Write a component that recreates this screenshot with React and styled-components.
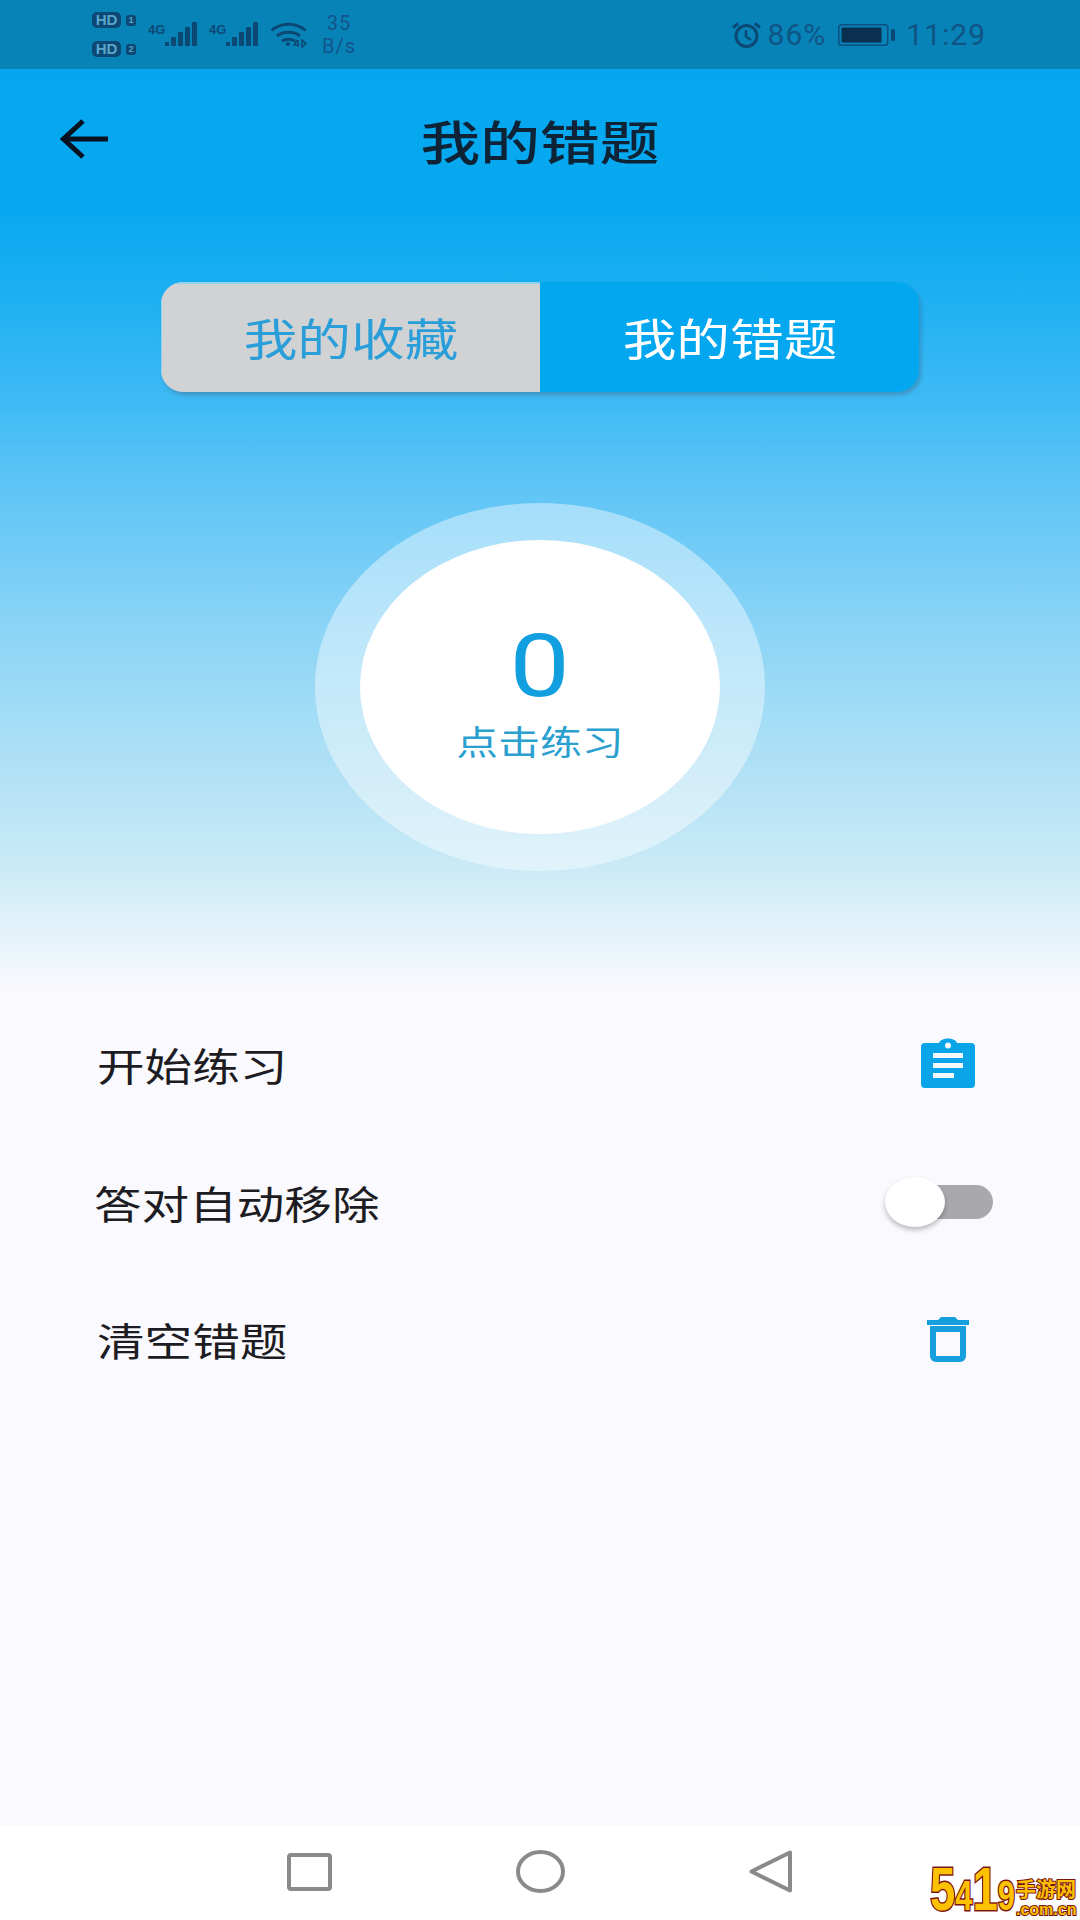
import styled, { createGlobalStyle } from "styled-components";

const GlobalStyle = createGlobalStyle`
  html, body {
    margin: 0;
    padding: 0;
  }

  body {
    font-family: "Noto Sans CJK SC", "Noto Sans", sans-serif;
    background: #f9f9fe;
  }
`;

const Page = styled.div`
  position: relative;
  width: 1080px;
  height: 1920px;
  display: flex;
  flex-direction: column;
  overflow: hidden;
  background: #f9f9fe;
`;

const StatusBar = styled.div`
  height: 69px;
  flex: none;
  display: flex;
  align-items: center;
  justify-content: space-between;
  padding: 0 94px 0 92px;
  background: #0783b8;
  color: #0c4f80;
`;

const StatusGroup = styled.div`
  display: flex;
  align-items: center;
`;

const SimColumn = styled.div`
  display: flex;
  flex-direction: column;
  gap: 13px;
  margin-right: 12px;
`;

const SimRow = styled.div`
  display: flex;
  align-items: center;
  gap: 5px;
`;

const HdBadge = styled.span`
  width: 29px;
  height: 16px;
  border-radius: 5px;
  background: #0b4974;
  color: #5aa6cb;
  font: 700 15px/16px "Liberation Sans", sans-serif;
  text-align: center;
`;

const SimIndex = styled.span`
  width: 10px;
  height: 11px;
  border-radius: 3px;
  background: #0b4974;
  color: #5aa5c9;
  font: 700 9px/11px "Liberation Sans", sans-serif;
  text-align: center;
`;

const SignalBlock = styled.div`
  width: 61px;
  display: flex;
`;

const Speed = styled.div`
  margin-left: 14px;
  width: 36px;
  display: flex;
  flex-direction: column;
  align-items: center;
  gap: 5px;
  font: 400 20px/18px Roboto, sans-serif;
  letter-spacing: 1px;
  color: #14548a;
`;

const StatusText = styled.span`
  font: 400 30px/1 Roboto, sans-serif;
  letter-spacing: 1px;
  color: #0f5484;
  margin: ${(p) => p.$margin};
`;

const Hero = styled.div`
  height: 921px;
  flex: none;
  display: flex;
  flex-direction: column;
  align-items: center;
  background: linear-gradient(
    180deg,
    #05a8f0 0px,
    #07a8f0 140px,
    #21b1f3 240px,
    #42bbf5 340px,
    #62c6f6 430px,
    #8ed5f6 570px,
    #abdff5 680px,
    #c8e9f6 790px,
    #eaf5fb 880px,
    #f9f9fe 921px
  );
`;

const Header = styled.header`
  position: relative;
  width: 100%;
  height: 143px;
  display: flex;
  align-items: center;
  justify-content: center;
`;

const BackButton = styled.button`
  position: absolute;
  left: 60px;
  top: 50px;
  padding: 0;
  border: 0;
  background: none;
  display: flex;
`;

const Title = styled.h1`
  margin: -3px 0 0;
  font-size: 47px;
  font-weight: 500;
  line-height: 1;
  letter-spacing: 0;
  color: #0f2336;
  transform: scaleX(1.27);
`;

const Tabs = styled.div`
  margin-top: 70px;
  width: 758px;
  height: 110px;
  display: grid;
  grid-template-columns: 1fr 1fr;
  border-radius: 22px;
  overflow: hidden;
  box-shadow: 2px 3px 4px rgba(70, 90, 120, 0.4);
`;

const Tab = styled.div`
  display: flex;
  align-items: center;
  justify-content: center;
  font-size: 44px;
  color: ${(p) => (p.$active ? "#ffffff" : "#2a9ed9")};
  background: ${(p) => (p.$active ? "#02a7f0" : "#d1d2d4")};
  box-shadow: ${(p) => (p.$active ? "none" : "inset 1px 2px 0 #8fd3ee")};

  span {
    display: block;
    transform: scaleX(1.22);
  }
`;

const Ring = styled.div`
  margin-top: 111px;
  width: 450px;
  height: 368px;
  flex: none;
  display: flex;
  align-items: center;
  justify-content: center;
  border-radius: 50%;
  background: rgba(255, 255, 255, 0.42);
`;

const Disc = styled.div`
  width: 360px;
  height: 294px;
  display: flex;
  flex-direction: column;
  align-items: center;
  border-radius: 50%;
  background: #ffffff;
`;

const Count = styled.div`
  margin-top: 82px;
  font: 400 88px/88px Roboto, sans-serif;
  color: #129fdf;
  transform: scaleX(1.22);
`;

const Practice = styled.div`
  margin-top: 11px;
  font-size: 34px;
  line-height: 40px;
  color: #2b9fd0;
  transform: scaleX(1.23);
`;

const List = styled.div`
  flex: 1;
  display: flex;
  flex-direction: column;
  padding-top: 6px;
`;

const Row = styled.div`
  height: 137.5px;
  display: flex;
  align-items: center;
  justify-content: space-between;
  padding: 0 ${(p) => p.$right}px 0 ${(p) => p.$left}px;
`;

const RowLabel = styled.span`
  font-size: 39px;
  line-height: 1;
  color: #1c1c22;
  transform: scaleX(1.22);
  transform-origin: left center;
`;

const ClipboardSvg = styled.svg`
  display: block;
  margin-top: -4px;
`;

const Toggle = styled.div`
  position: relative;
  width: 93px;
  height: 34px;
  border-radius: 17px;
  background: #a9a8ad;
`;

const Knob = styled.div`
  position: absolute;
  left: -15px;
  top: -8px;
  width: 60px;
  height: 50px;
  border-radius: 50%;
  background: #ffffff;
  box-shadow: 0 3px 5px rgba(0, 0, 0, 0.25);
`;

const NavBar = styled.nav`
  box-sizing: border-box;
  height: 95px;
  flex: none;
  display: flex;
  align-items: center;
  padding: 0 0 2px 287px;
  gap: 184px;
  background: #ffffff;
`;

const NavShape = styled.svg`
  display: block;
  flex: none;
`;

const Watermark = styled.div`
  position: absolute;
  right: 0;
  bottom: 0;
  width: 150px;
  height: 70px;
  display: flex;
  align-items: flex-end;
  font-family: "Liberation Sans", sans-serif;
  font-weight: 700;
  color: #fcc200;
  -webkit-text-stroke: 3px #7c1412;
  paint-order: stroke fill;
`;

const MarkDigits = styled.div`
  width: 86px;
  flex: none;
  display: flex;
  align-items: baseline;
  transform: scaleX(0.735);
  transform-origin: left bottom;
`;

const MarkDigit = styled.span`
  font-size: ${(p) => (p.$big ? 62 : 42)}px;
  line-height: 1;
`;

const MarkSide = styled.div`
  display: flex;
  flex-direction: column;
  align-items: flex-start;
  padding-bottom: 1px;
`;

const MarkName = styled.div`
  font-family: "Noto Sans CJK SC", sans-serif;
  font-size: 20px;
  line-height: 24px;
  -webkit-text-stroke: 2px #7c1412;
`;

const MarkDomain = styled.div`
  font-size: 16px;
  line-height: 18px;
  -webkit-text-stroke: 2px #7c1412;
`;

function Signal() {
  return (
    <svg width="61" height="26" viewBox="0 0 61 26">
      <text x="0" y="12" fontFamily="Liberation Sans" fontWeight="700" fontSize="13" fill="#0b4974">
        4G
      </text>
      <g fill="#0b4974">
        <rect x="17" y="20" width="4" height="4" />
        <rect x="23" y="15" width="5" height="9" rx="1" />
        <rect x="30" y="10" width="5" height="14" rx="1" />
        <rect x="37" y="5" width="5" height="19" rx="1" />
        <rect x="44" y="0" width="5" height="24" rx="1" />
      </g>
    </svg>
  );
}

function Wifi() {
  return (
    <svg width="37" height="26" viewBox="0 0 37 26" fill="none" stroke="#0b4974" strokeWidth="3">
      <path d="M1.5 8.5C11 0 26 0 35.5 8.5" />
      <path d="M7 14C13 9 24 9 30 14" />
      <path d="M12 19C15.5 16.5 21.5 16.5 25 19" />
      <circle cx="18" cy="22" r="2" fill="#0b4974" stroke="none" />
      <path d="M27 18l-3 5h5M28 18v7M32 18l4 3.5-4 3.5z" strokeWidth="1.6" />
    </svg>
  );
}

function Alarm() {
  return (
    <svg width="31" height="26" viewBox="0 0 31 26" fill="none" stroke="#0b4974" strokeWidth="3">
      <circle cx="15.5" cy="14" r="10.5" />
      <path d="M15 8v6.5l5 3.5" strokeWidth="2.5" />
      <path d="M2 5.5L7 1.5M29 5.5L24 1.5" />
    </svg>
  );
}

function Battery() {
  return (
    <svg width="57" height="22" viewBox="0 0 57 22">
      <rect x="0.75" y="0.75" width="49" height="20.5" rx="3" fill="none" stroke="#0c4f80" strokeWidth="1.5" />
      <rect x="3.5" y="3.5" width="40" height="15" rx="1" fill="#0b2f4f" />
      <rect x="53" y="5" width="4" height="12" rx="1.5" fill="#0b4974" />
    </svg>
  );
}

function BackArrow() {
  return (
    <svg width="48" height="40" viewBox="0 0 48 40" fill="none" stroke="#07111f" strokeWidth="5">
      <path d="M48 20H4" />
      <path d="M23 2L3.5 20L23 38" />
    </svg>
  );
}

function ClipboardIcon() {
  return (
    <ClipboardSvg width="54" height="50" viewBox="0 0 54 50">
      <path
        fill="#0aa4e8"
        d="M4 5h14c2-6 16-6 18 0h14a4 4 0 0 1 4 4v37a4 4 0 0 1-4 4H4a4 4 0 0 1-4-4V9a4 4 0 0 1 4-4z"
      />
      <circle cx="27" cy="7.5" r="3" fill="#f4f9fe" />
      <rect x="12" y="15" width="30" height="5" fill="#f4f9fe" />
      <rect x="12" y="25" width="30" height="5" fill="#f4f9fe" />
      <rect x="12" y="35" width="21" height="5" fill="#f4f9fe" />
    </ClipboardSvg>
  );
}

function TrashIcon() {
  return (
    <svg width="42" height="45" viewBox="0 0 42 45">
      <path fill="#169fdc" d="M0 3h11l3-3h14l3 3h11v5H0z" />
      <path
        fill="none"
        stroke="#169fdc"
        strokeWidth="6"
        d="M6 12h30v27a3 3 0 0 1-3 3H9a3 3 0 0 1-3-3z"
      />
    </svg>
  );
}

const rows = [
  { label: "开始练习", left: 97, right: 105, control: <ClipboardIcon /> },
  {
    label: "答对自动移除",
    left: 94,
    right: 87,
    control: (
      <Toggle>
        <Knob />
      </Toggle>
    ),
  },
  { label: "清空错题", left: 97, right: 111, control: <TrashIcon /> },
];

export default function App() {
  return (
    <Page>
      <GlobalStyle />
      <StatusBar>
        <StatusGroup>
          <SimColumn>
            <SimRow>
              <HdBadge>HD</HdBadge>
              <SimIndex>1</SimIndex>
            </SimRow>
            <SimRow>
              <HdBadge>HD</HdBadge>
              <SimIndex>2</SimIndex>
            </SimRow>
          </SimColumn>
          <SignalBlock>
            <Signal />
          </SignalBlock>
          <SignalBlock>
            <Signal />
          </SignalBlock>
          <Wifi />
          <Speed>
            <span>35</span>
            <span>B/s</span>
          </Speed>
        </StatusGroup>
        <StatusGroup>
          <Alarm />
          <StatusText $margin="0 12px 0 6px">86%</StatusText>
          <Battery />
          <StatusText $margin="0 0 0 11px">11:29</StatusText>
        </StatusGroup>
      </StatusBar>

      <Hero>
        <Header>
          <BackButton>
            <BackArrow />
          </BackButton>
          <Title>我的错题</Title>
        </Header>
        <Tabs>
          <Tab>
            <span>我的收藏</span>
          </Tab>
          <Tab $active>
            <span>我的错题</span>
          </Tab>
        </Tabs>
        <Ring>
          <Disc>
            <Count>0</Count>
            <Practice>点击练习</Practice>
          </Disc>
        </Ring>
      </Hero>

      <List>
        {rows.map((row) => (
          <Row key={row.label} $left={row.left} $right={row.right}>
            <RowLabel>{row.label}</RowLabel>
            {row.control}
          </Row>
        ))}
      </List>

      <NavBar>
        <NavShape width="45" height="38" viewBox="0 0 45 38" fill="none" stroke="#888a8c" strokeWidth="4">
          <rect x="2" y="2" width="41" height="34" rx="2" />
        </NavShape>
        <NavShape width="49" height="43" viewBox="0 0 49 43" fill="none" stroke="#888a8c" strokeWidth="4">
          <ellipse cx="24.5" cy="21.5" rx="22.5" ry="19.5" />
        </NavShape>
        <NavShape width="43" height="43" viewBox="0 0 43 43" fill="none" stroke="#888a8c" strokeWidth="4" strokeLinejoin="round">
          <path d="M41 2.5V40.5L2.5 21.5z" />
        </NavShape>
      </NavBar>

      <Watermark>
        <MarkDigits>
          <MarkDigit $big>5</MarkDigit>
          <MarkDigit>4</MarkDigit>
          <MarkDigit $big>1</MarkDigit>
          <MarkDigit>9</MarkDigit>
        </MarkDigits>
        <MarkSide>
          <MarkName>手游网</MarkName>
          <MarkDomain>.com.cn</MarkDomain>
        </MarkSide>
      </Watermark>
    </Page>
  );
}
